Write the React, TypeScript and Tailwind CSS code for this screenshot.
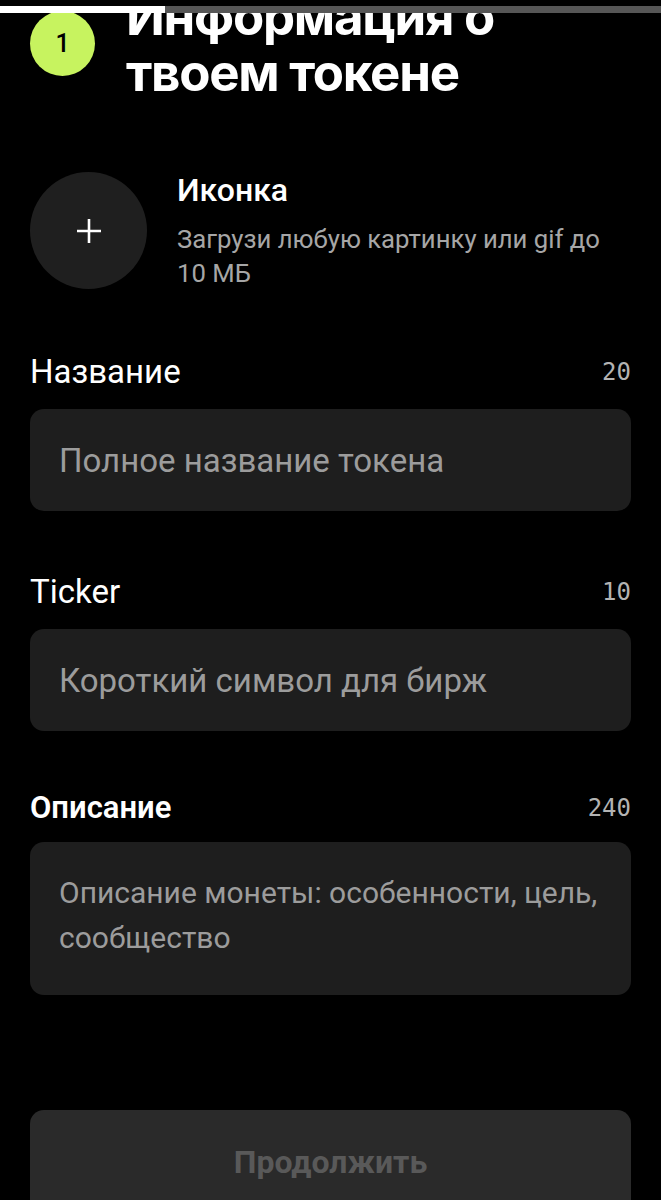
import React from 'react'

const body = "font-['Roboto','Noto_Sans',sans-serif]"

function Field({
  label,
  limit,
  placeholder,
}: {
  label: string
  limit: number
  placeholder: string
}) {
  return (
    <div>
      <div className="flex items-center justify-between">
        <span className="text-[33px] leading-[36px] text-white">{label}</span>
        <span className="font-['DejaVu_Sans_Mono',monospace] text-[24px] text-[#b3b3b3]">{limit}</span>
      </div>
      <input
        type="text"
        placeholder={placeholder}
        className="mt-[19px] h-[102px] w-full rounded-[14px] bg-[#1e1e1e] px-[29px] text-[33px] text-white outline-none placeholder:text-[#9c9c9c]"
      />
    </div>
  )
}

export default function App(): React.JSX.Element {
  return (
    <div className={`flex h-[1200px] flex-col overflow-hidden bg-black ${body}`}>
      {/* progress */}
      <div className="relative z-10 h-[13px] shrink-0 bg-black pt-[6px]">
        <div className="flex h-[7px]">
          <div className="w-[165px] bg-white" />
          <div className="flex-1 bg-[#565656]" />
        </div>
      </div>

      <div className="flex-1 overflow-hidden px-[30px]">
        <div className="-mt-[24px] flex items-start gap-[31px]">
          <div className="mt-[22px] flex h-[65px] w-[65px] shrink-0 items-center justify-center rounded-full bg-[#c7f35f] text-[25px] font-medium text-black">
            1
          </div>
          <h1 className="font-['Inter',sans-serif] text-[51px] font-bold leading-[56px] tracking-[-0.025em] text-white">
            Информация о
            <br />
            твоем токене
          </h1>
        </div>

        <div className="mt-[71px] flex items-start gap-[30px]">
          <button className="flex h-[117px] w-[117px] shrink-0 items-center justify-center rounded-full bg-[#1f1f1f]">
            <svg width="26" height="26" viewBox="0 0 26 26" fill="none" stroke="white" strokeWidth="2.6">
              <path d="M13 1v24M1 13h24" />
            </svg>
          </button>
          <div>
            <p className="text-[32px] font-medium leading-[36px] text-white">Иконка</p>
            <p className="mt-[14px] text-[25.7px] leading-[34px] text-[#a6a6a6]">
              Загрузи любую картинку или gif до 10 МБ
            </p>
          </div>
        </div>

        <div className="mt-[64px]">
          <Field label="Название" limit={20} placeholder="Полное название токена" />
        </div>
        <div className="mt-[63px]">
          <Field label="Ticker" limit={10} placeholder="Короткий символ для бирж" />
        </div>

        <div className="mt-[59px]">
          <div className="flex items-center justify-between">
            <span className="text-[31px] font-semibold leading-[36px] text-white">Описание</span>
            <span className="font-['DejaVu_Sans_Mono',monospace] text-[24px] text-[#b3b3b3]">240</span>
          </div>
          <textarea
            placeholder="Описание монеты: особенности, цель, сообщество"
            className="mt-[16px] block h-[153px] w-full resize-none rounded-[14px] bg-[#1e1e1e] px-[29px] pt-[28px] text-[30px] leading-[45px] text-white outline-none placeholder:text-[#9c9c9c]"
          />
        </div>

        <button
          disabled
          className="mt-[115px] h-[104px] w-full rounded-[14px] bg-[#2a2a2a] text-[32px] font-bold text-[#595959]"
        >
          Продолжить
        </button>
      </div>
    </div>
  )
}
